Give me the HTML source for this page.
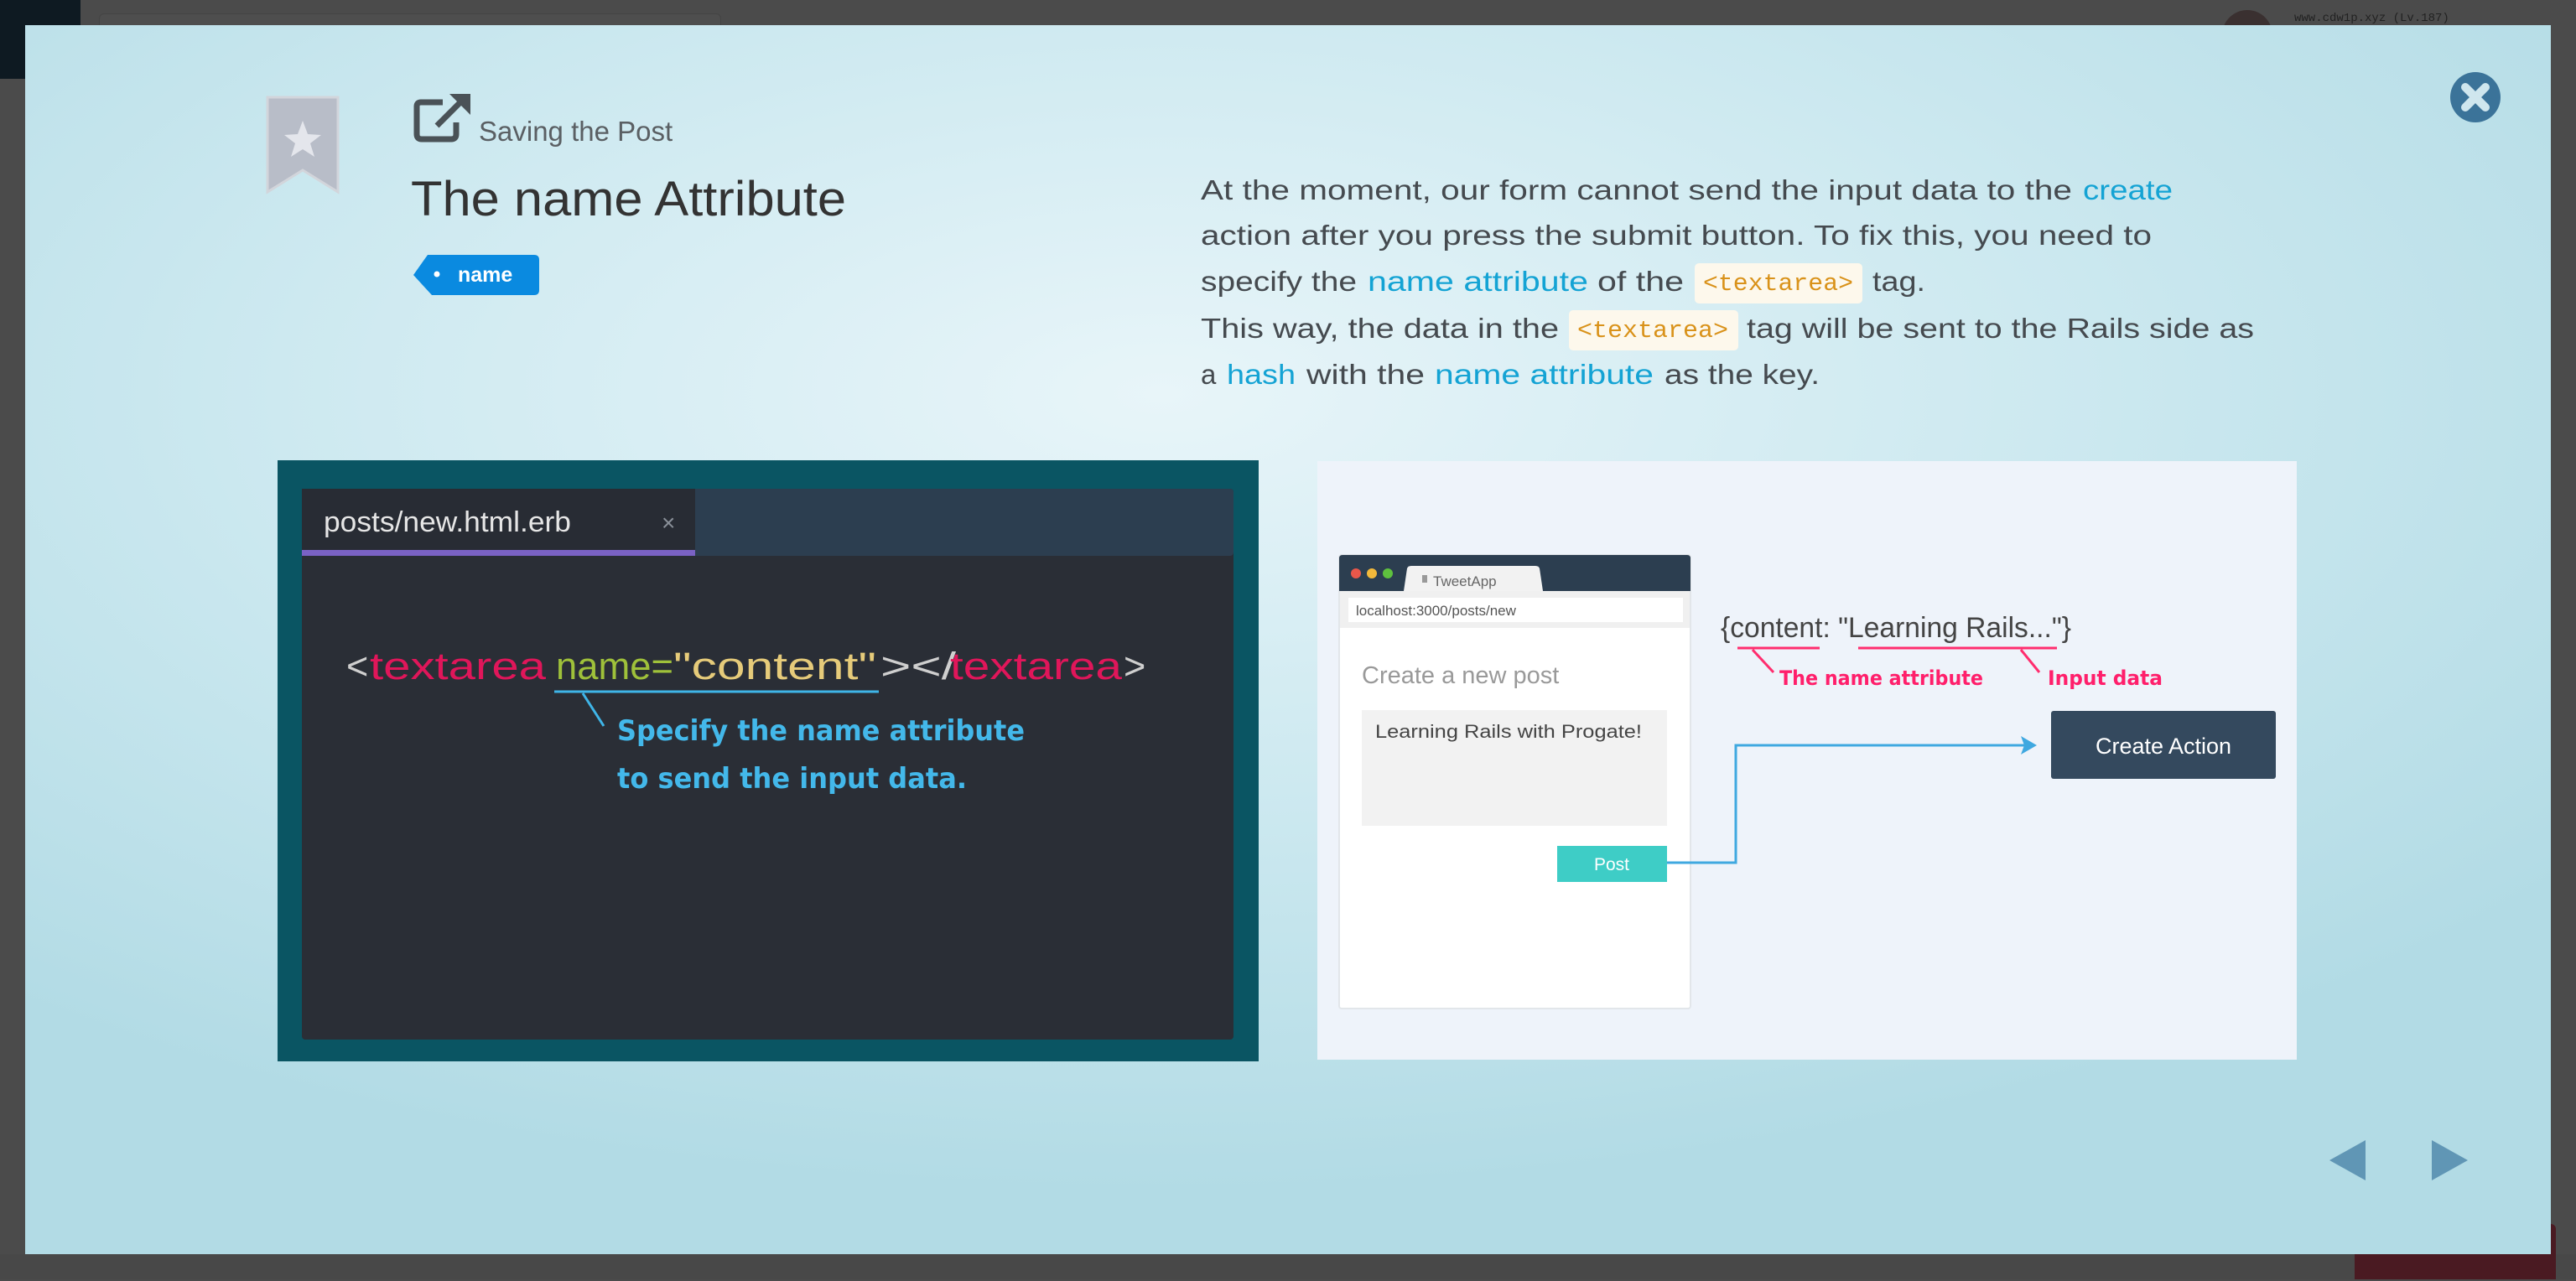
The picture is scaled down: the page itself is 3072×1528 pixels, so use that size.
<!DOCTYPE html>
<html><head><meta charset="utf-8"><style>
html,body{margin:0;padding:0;width:3072px;height:1526px;overflow:hidden;background:#4b4b4b;font-family:"Liberation Sans",sans-serif}
.abs{position:absolute}
</style></head><body>
<div class="abs" style="left:0;top:0;width:96px;height:94px;background:#0e1a22"></div>
<div class="abs" style="left:118px;top:16px;width:740px;height:30px;border:1px solid #444;border-radius:6px;background:#4e4e4e"></div>
<div class="abs" style="left:2650px;top:12px;width:60px;height:60px;border-radius:50%;background:#3a3030"></div>
<div class="abs" style="left:2736px;top:14px;font-size:14px;color:#222;font-family:'Liberation Mono',monospace">www.cdw1p.xyz (Lv.187)</div>
<div class="abs" style="left:2808px;top:1460px;width:240px;height:66px;background:#4a1a22;border-radius:6px 6px 0 0"></div>
<div class="abs" style="left:2878px;top:1494px;font-size:30px;color:#666">Contact us!</div>
<div class="abs" style="left:0;top:1496px;width:3072px;height:30px;background:#484848"></div>
<div class="abs" style="left:2808px;top:1496px;width:240px;height:30px;background:#4a1a22"></div>

<div class="abs" style="left:30px;top:30px;width:3012px;height:1466px;background:radial-gradient(ellipse 70% 65% at 45% 30%,#e8f5f9 0%,#cde9f0 50%,#b2dbe5 100%)"></div>

<svg class="abs" style="left:0;top:0" width="3072" height="1526" viewBox="0 0 3072 1526">
<!-- bookmark -->
<path d="M319 116 H403 V229 L361 203 L319 229 Z" fill="#b8bdc8" stroke="#d2d5db" stroke-width="3"/>
<path d="M361 144 L367 160 L383 161 L370 171 L375 187 L361 178 L347 187 L352 171 L339 161 L355 160 Z" fill="#e4e6ec"/>
<!-- external link icon -->
<path d="M528 122 H502 Q497 122 497 127 V160 Q497 166 503 166 H538 Q544 166 544 160 V146" fill="none" stroke="#4a5257" stroke-width="7" stroke-linejoin="round"/>
<path d="M521 150 L553 118" stroke="#4a5257" stroke-width="7"/>
<path d="M536 112 H561 V137 Z" fill="#4a5257"/>
<text x="571" y="168" font-size="33" fill="#5a5f63" font-family="Liberation Sans">Saving the Post</text>
<text x="490" y="257" font-size="58" fill="#333" textLength="519" lengthAdjust="spacingAndGlyphs">The name Attribute</text>
<!-- tag -->
<path d="M510 304 H637 Q643 304 643 310 V346 Q643 352 637 352 H515 L493 328 Z" fill="#0a8ae0"/>
<circle cx="521" cy="327" r="3.5" fill="#fff"/>
<text x="546" y="336" font-size="25" fill="#fff" font-weight="bold">name</text>
<!-- close -->
<circle cx="2952" cy="116" r="30" fill="#3b7399"/>
<path d="M2940 104 L2964 128 M2964 104 L2940 128" stroke="#cfe6ee" stroke-width="10" stroke-linecap="round"/>
<!-- paragraph -->
<g font-size="33" fill="#454a4f">
<text x="1432" y="238" textLength="1039" lengthAdjust="spacingAndGlyphs">At the moment, our form cannot send the input data to the</text>
<text x="2484" y="238" fill="#14a3d4" textLength="107" lengthAdjust="spacingAndGlyphs">create</text>
<text x="1432" y="292" textLength="1134" lengthAdjust="spacingAndGlyphs">action after you press the submit button. To fix this, you need to</text>
<text x="1432" y="347" textLength="186" lengthAdjust="spacingAndGlyphs">specify the</text>
<text x="1631" y="347" fill="#14a3d4" textLength="263" lengthAdjust="spacingAndGlyphs">name attribute</text>
<text x="1905" y="347" textLength="103" lengthAdjust="spacingAndGlyphs">of the</text>
<rect x="2021" y="314" width="200" height="48" rx="5" fill="#fdf8ec"/>
<text x="2031" y="346" fill="#d9921a" font-family="Liberation Mono" font-size="29" textLength="179" lengthAdjust="spacingAndGlyphs">&lt;textarea&gt;</text>
<text x="2233" y="347" textLength="63" lengthAdjust="spacingAndGlyphs">tag.</text>
<text x="1432" y="403" textLength="427" lengthAdjust="spacingAndGlyphs">This way, the data in the</text>
<rect x="1871" y="370" width="202" height="48" rx="5" fill="#fdf8ec"/>
<text x="1881" y="402" fill="#d9921a" font-family="Liberation Mono" font-size="29" textLength="180" lengthAdjust="spacingAndGlyphs">&lt;textarea&gt;</text>
<text x="2083" y="403" textLength="605" lengthAdjust="spacingAndGlyphs">tag will be sent to the Rails side as</text>
<text x="1432" y="458">a</text>
<text x="1463" y="458" fill="#14a3d4" textLength="82" lengthAdjust="spacingAndGlyphs">hash</text>
<text x="1558" y="458" textLength="141" lengthAdjust="spacingAndGlyphs">with the</text>
<text x="1711" y="458" fill="#14a3d4" textLength="261" lengthAdjust="spacingAndGlyphs">name attribute</text>
<text x="1985" y="458" textLength="185" lengthAdjust="spacingAndGlyphs">as the key.</text>
</g>
<!-- left image -->
<rect x="331" y="549" width="1170" height="717" fill="#0a5563"/>
<rect x="360" y="583" width="1111" height="657" rx="4" fill="#2a2e36"/>
<rect x="360" y="583" width="1111" height="80" rx="4" fill="#2c3e50"/>
<rect x="360" y="583" width="469" height="80" fill="#282c34"/>
<rect x="360" y="656" width="469" height="7" fill="#7a62c4"/>
<text x="386" y="634" font-size="34" fill="#e6e6e6" textLength="295" lengthAdjust="spacingAndGlyphs">posts/new.html.erb</text>
<text x="789" y="633" font-size="28" fill="#8a9099">×</text>
<g font-size="45">
<text x="413" y="810" fill="#cfcfcf">&lt;</text>
<text x="441" y="810" fill="#e0165a" textLength="210" lengthAdjust="spacingAndGlyphs">textarea</text>
<text x="663" y="810" fill="#9fc13a" textLength="140" lengthAdjust="spacingAndGlyphs">name=</text>
<text x="803" y="810" fill="#e6cb7a" textLength="242" lengthAdjust="spacingAndGlyphs">"content"</text>
<text x="1050" y="810" fill="#cfcfcf" textLength="90" lengthAdjust="spacingAndGlyphs">&gt;&lt;/</text>
<text x="1133" y="810" fill="#e0165a" textLength="205" lengthAdjust="spacingAndGlyphs">textarea</text>
<text x="1340" y="810" fill="#cfcfcf">&gt;</text>
</g>
<path d="M661 825 H1048 M695 827 L720 866" stroke="#3fb5e8" stroke-width="3" fill="none"/>
<g font-size="34" fill="#43b8ea" font-weight="bold" font-family="DejaVu Sans">
<text x="736" y="883" textLength="486" lengthAdjust="spacingAndGlyphs">Specify the name attribute</text>
<text x="736" y="940" textLength="417" lengthAdjust="spacingAndGlyphs">to send the input data.</text>
</g>
<!-- right image -->
<rect x="1571" y="550" width="1168" height="714" fill="#eef3fa"/>
<rect x="1597" y="662" width="419" height="541" rx="3" fill="#fff" stroke="#e2e6ea" stroke-width="2"/>
<path d="M1597 666 Q1597 662 1601 662 H2012 Q2016 662 2016 666 V705 H1597 Z" fill="#2c3e50"/>
<path d="M1674 705 L1678 678 Q1679 675 1683 675 H1831 Q1835 675 1836 678 L1840 705 Z" fill="#f2f2f2"/>
<text x="1709" y="699" font-size="17" fill="#666">TweetApp</text>
<rect x="1696" y="686" width="6" height="9" fill="#999"/>
<circle cx="1617" cy="684" r="6" fill="#e8574a"/><circle cx="1636" cy="684" r="6" fill="#f3b93b"/><circle cx="1655" cy="684" r="6" fill="#5ec13e"/>
<rect x="1598" y="705" width="417" height="44" fill="#f0f0f0"/>
<rect x="1608" y="713" width="399" height="29" fill="#fff"/>
<text x="1617" y="734" font-size="17" fill="#555">localhost:3000/posts/new</text>
<text x="1624" y="815" font-size="29" fill="#999">Create a new post</text>
<rect x="1624" y="847" width="364" height="138" fill="#f2f2f2"/>
<text x="1640" y="880" font-size="22" fill="#444" textLength="318" lengthAdjust="spacingAndGlyphs">Learning Rails with Progate!</text>
<rect x="1857" y="1009" width="131" height="43" fill="#3ecdc6"/>
<text x="1922" y="1038" font-size="21" fill="#fff" text-anchor="middle">Post</text>
<path d="M1988 1029 H2070 V889 H2418" stroke="#3fa8e0" stroke-width="3" fill="none"/>
<path d="M2429 889 L2410 878 L2414 889 L2410 900 Z" fill="#3fa8e0"/>
<rect x="2446" y="848" width="268" height="81" rx="3" fill="#34495e"/>
<text x="2580" y="899" font-size="27" fill="#fff" text-anchor="middle">Create Action</text>
<text x="2052" y="760" font-size="34" fill="#444" textLength="418" lengthAdjust="spacingAndGlyphs">{content: "Learning Rails..."}</text>
<path d="M2072 773 H2170 M2216 773 H2453 M2090 775 L2115 802 M2410 775 L2432 802" stroke="#ff2d6e" stroke-width="3" fill="none"/>
<g font-size="24" fill="#ff1f6b" font-weight="bold" font-family="DejaVu Sans">
<text x="2122" y="817" textLength="243" lengthAdjust="spacingAndGlyphs">The name attribute</text>
<text x="2442" y="817" textLength="137" lengthAdjust="spacingAndGlyphs">Input data</text>
</g>
<!-- nav -->
<path d="M2821 1360 V1408 L2778 1384 Z" fill="#6096b5"/>
<path d="M2900 1360 V1408 L2943 1384 Z" fill="#6096b5"/>
</svg>
</body></html>
